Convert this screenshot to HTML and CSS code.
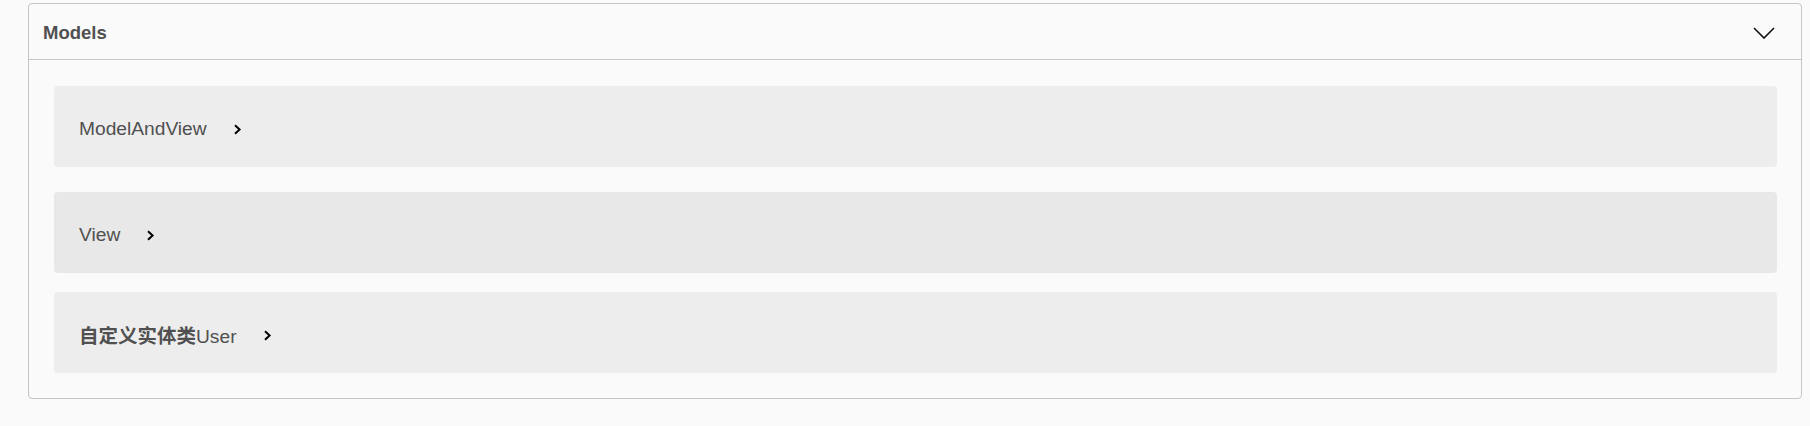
FILE: index.html
```html
<!DOCTYPE html>
<html lang="zh">
<head>
<meta charset="utf-8">
<title>Models</title>
<link rel="stylesheet" href="styles.css">
</head>
<body>
<section class="models">
  <div class="models-header">
    <h4 class="models-title">Models</h4>
    <svg class="chev-down" width="22" height="12" viewBox="0 0 22 12" aria-hidden="true"><path d="M1 1 L11 11 L21 1" fill="none" stroke="#111" stroke-width="1.6"/></svg>
  </div>
  <div class="models-body">
    <div class="model-box first">
      <span class="model-name">ModelAndView</span>
      <svg class="chev-right" width="9" height="11" viewBox="0 0 9 11" aria-hidden="true"><path d="M2 1.2 L6.6 5.5 L2 9.8" fill="none" stroke="#000" stroke-width="2"/></svg>
    </div>
    <div class="model-box hover">
      <span class="model-name">View</span>
      <svg class="chev-right" width="9" height="11" viewBox="0 0 9 11" aria-hidden="true"><path d="M2 1.2 L6.6 5.5 L2 9.8" fill="none" stroke="#000" stroke-width="2"/></svg>
    </div>
    <div class="model-box">
      <span class="model-name"><span class="cjk">自定义实体类</span>User</span>
      <svg class="chev-right" width="9" height="11" viewBox="0 0 9 11" aria-hidden="true"><path d="M2 1.2 L6.6 5.5 L2 9.8" fill="none" stroke="#000" stroke-width="2"/></svg>
    </div>
  </div>
</section>
</body>
</html>
```

FILE: styles.css
```css
html, body {
  margin: 0;
  padding: 0;
  background: #fafafa;
}
body {
  padding: 3px 8px 27px 28px;
  font-family: "Liberation Sans", "Noto Sans CJK SC", sans-serif;
  color: #505050;
}
.models {
  border: 1px solid #c4c5c9;
  border-radius: 4px;
  background: #fafafa;
}
.models-header {
  height: 56px;
  box-sizing: border-box;
  display: flex;
  align-items: center;
  justify-content: space-between;
  padding: 3px 26px 0 14px;
  border-bottom: 1px solid #c8c8c8;
}
.models-title {
  margin: 0;
  font-size: 18.5px;
  font-weight: bold;
  color: #505050;
}
.chev-down {
  display: block;
  margin-top: -1px;
}
.models-body {
  padding: 26px 24px 25px 25px;
  display: flex;
  flex-direction: column;
  gap: 19px;
}
.model-box {
  height: 81px;
  box-sizing: border-box;
  padding-top: 4px;
  background: #ededed;
  border-radius: 4px;
  display: flex;
  align-items: center;
  padding-left: 25px;
}
.model-box.first {
  margin-bottom: 6px;
}
.model-box.hover {
  background: #e8e8e8;
}
.model-name {
  font-size: 19.2px;
  color: #505050;
}
.cjk {
  font-family: "Noto Sans CJK SC", sans-serif;
  font-weight: bold;
  font-size: 19.5px;
}
.chev-right {
  display: block;
  margin-left: 26px;
  margin-top: 2px;
}
```
